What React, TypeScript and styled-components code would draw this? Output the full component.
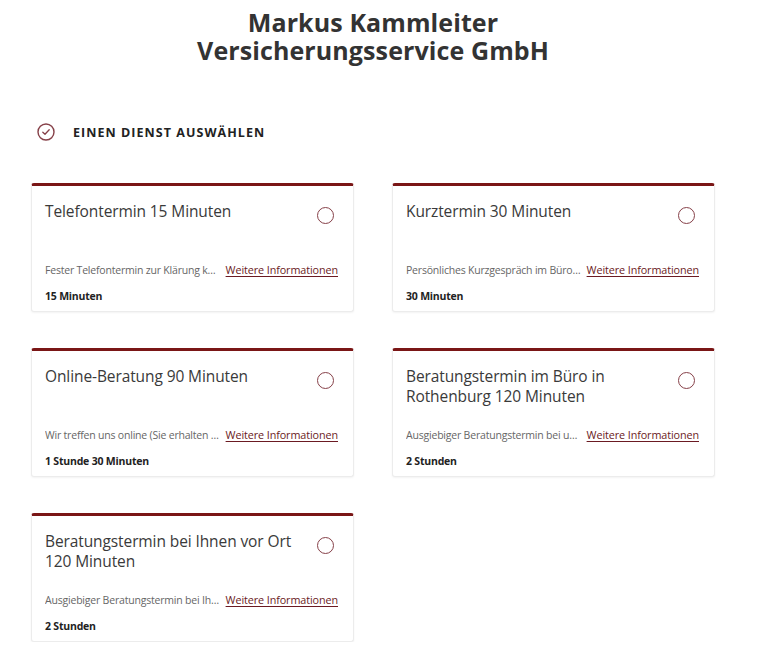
import * as React from "react";
import styled, { createGlobalStyle } from "styled-components";

const GlobalStyle = createGlobalStyle`
  html, body {
    margin: 0;
    padding: 0;
    background: #ffffff;
  }
  body {
    font-family: "Open Sans", "Noto Sans", "Liberation Sans", sans-serif;
    color: #333333;
  }
`;

const ACCENT = "#7a1616";
const RADIO = "#864048";

const Page = styled.div`
  width: 746px;
  padding-top: 8px;
`;

const CompanyName = styled.h1`
  margin: 0;
  text-align: center;
  font-size: 25px;
  line-height: 28px;
  font-weight: 700;
  color: #333333;
  letter-spacing: 0.1px;
`;

const Section = styled.section`
  padding: 0 31px;
  margin-top: 53px;
`;

const SectionHeader = styled.div`
  display: flex;
  align-items: center;
  gap: 18px;
  padding-left: 6px;
  height: 30px;
`;

const SectionTitle = styled.h2`
  margin: 0;
  font-size: 12.5px;
  font-weight: 700;
  letter-spacing: 1.05px;
  text-transform: uppercase;
  color: #222222;
`;

const Grid = styled.div`
  display: grid;
  grid-template-columns: 323px 323px;
  column-gap: 38px;
  row-gap: 36px;
  margin-top: 36px;
`;

const Card = styled.div`
  height: 129px;
  box-sizing: border-box;
  border: 1px solid #ececec;
  border-top: 3px solid ${ACCENT};
  border-radius: 3px;
  box-shadow: 0 1px 2px rgba(0, 0, 0, 0.05);
  padding: 15px 15px 0 13px;
  display: flex;
  flex-direction: column;
  background: #ffffff;
`;

const CardHead = styled.div`
  display: flex;
  align-items: flex-start;
  justify-content: space-between;
  height: 61px;
`;

const CardTitle = styled.div`
  font-size: 15.5px;
  font-weight: 400;
  line-height: 20px;
  color: #3a3a3a;
  max-width: 262px;
  letter-spacing: -0.1px;
`;

const Radio = styled.span`
  flex-shrink: 0;
  width: 15px;
  height: 15px;
  border: 1.6px solid ${RADIO};
  border-radius: 50%;
  margin-top: 6px;
  margin-right: 4px;
`;

const InfoRow = styled.div`
  display: flex;
  align-items: center;
  gap: 6px;
  height: 16px;
  font-size: 10.5px;
  line-height: 16px;
`;

const Description = styled.span`
  flex: 1;
  min-width: 0;
  white-space: nowrap;
  overflow: hidden;
  text-overflow: ellipsis;
  color: #666666;
  letter-spacing: -0.2px;
`;

const MoreLink = styled.a`
  flex-shrink: 0;
  font-size: 10.8px;
  color: #6b1a22;
  text-decoration: underline;
  text-underline-offset: 2px;
  letter-spacing: -0.1px;
  cursor: pointer;
`;

const Duration = styled.div`
  margin-top: 11px;
  font-size: 10.5px;
  font-weight: 700;
  color: #222222;
  letter-spacing: -0.2px;
`;

function CheckCircle() {
  return (
    <svg width="18" height="18" viewBox="0 0 18 18" fill="none">
      <circle cx="9" cy="9" r="8" stroke={RADIO} strokeWidth="1.4" />
      <path
        d="M5.8 9.2 L8 11.3 L12.2 6.8"
        stroke={RADIO}
        strokeWidth="1.3"
        strokeLinecap="round"
        strokeLinejoin="round"
      />
    </svg>
  );
}

interface IService {
  title: string;
  description: string;
  duration: string;
}

const services: IService[] = [
  {
    title: "Telefontermin 15 Minuten",
    description: "Fester Telefontermin zur Klärung kurzer Fragen",
    duration: "15 Minuten",
  },
  {
    title: "Kurztermin 30 Minuten",
    description: "Persönliches Kurzgespräch im Büro in Rothenburg",
    duration: "30 Minuten",
  },
  {
    title: "Online-Beratung 90 Minuten",
    description: "Wir treffen uns online (Sie erhalten einen Link)",
    duration: "1 Stunde 30 Minuten",
  },
  {
    title: "Beratungstermin im Büro in Rothenburg 120 Minuten",
    description: "Ausgiebiger Beratungstermin bei uns im Büro",
    duration: "2 Stunden",
  },
  {
    title: "Beratungstermin bei Ihnen vor Ort 120 Minuten",
    description: "Ausgiebiger Beratungstermin bei Ihnen zu Hause",
    duration: "2 Stunden",
  },
];

function ServiceCard({ service }: { service: IService }) {
  return (
    <Card>
      <CardHead>
        <CardTitle>{service.title}</CardTitle>
        <Radio />
      </CardHead>
      <InfoRow>
        <Description>{service.description}</Description>
        <MoreLink>Weitere Informationen</MoreLink>
      </InfoRow>
      <Duration>{service.duration}</Duration>
    </Card>
  );
}

export default function App() {
  return (
    <Page>
      <GlobalStyle />
      <CompanyName>
        Markus Kammleiter
        <br />
        Versicherungsservice GmbH
      </CompanyName>
      <Section>
        <SectionHeader>
          <CheckCircle />
          <SectionTitle>Einen Dienst auswählen</SectionTitle>
        </SectionHeader>
        <Grid>
          {services.map(s => (
            <ServiceCard key={s.title} service={s} />
          ))}
        </Grid>
      </Section>
    </Page>
  );
}
